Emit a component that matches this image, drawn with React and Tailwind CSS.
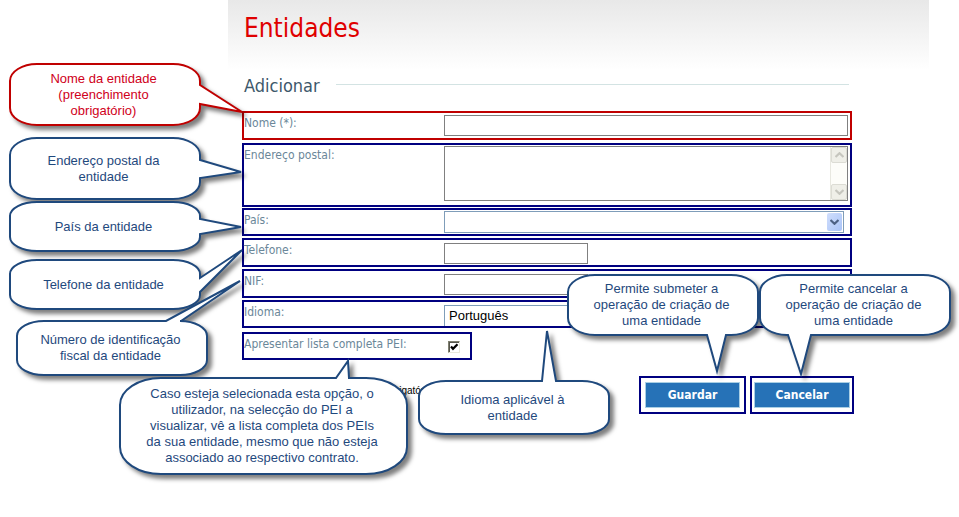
import React from "react";

const CALLOUTS = [
  {
    id: "nome",
    place: "left-[10px] top-[64px] w-[190px] h-[61px] text-[#d00020]",
    stroke: "#c00000",
    size: [190, 61], radius: [27, 17],
    side: "right", tail: [21, 232, 48, 40],
    lines: ["Nome da entidade", "(preenchimento", "obrigatório)"],
  },
  {
    id: "endereco",
    place: "left-[10px] top-[138px] w-[190px] h-[61px] text-[#1f497d]",
    size: [190, 61], radius: [27, 17],
    side: "right", tail: [22, 231, 34, 40],
    lines: ["Endereço postal da", "entidade"],
  },
  {
    id: "pais",
    place: "left-[10px] top-[202px] w-[190px] h-[49px] text-[#1f497d]",
    size: [190, 49], radius: [27, 14],
    side: "right", tail: [17, 231, 25, 32],
    lines: ["País da entidade"],
  },
  {
    id: "telefone",
    place: "left-[10px] top-[260px] w-[190px] h-[49px] text-[#1f497d]",
    size: [190, 49], radius: [27, 14],
    side: "right", tail: [18, 232, -10, 32],
    lines: ["Telefone da entidade"],
  },
  {
    id: "nif",
    place: "left-[17px] top-[321px] w-[190px] h-[54px] text-[#1f497d]",
    size: [190, 54], radius: [27, 15],
    side: "top", tail: [149, 223, -40, 164],
    lines: ["Número de identificação", "fiscal da entidade"],
  },
  {
    id: "lista",
    place: "left-[120px] top-[378px] w-[287px] h-[96px] text-[#1f497d]",
    size: [287, 96], radius: [41, 27],
    side: "top", tail: [216, 228, -17, 229],
    lines: [
      "Caso esteja selecionada esta opção, o",
      "utilizador, na selecção do PEI a",
      "visualizar, vê a lista completa dos PEIs",
      "da sua entidade, mesmo que não esteja",
      "associado ao respectivo contrato.",
    ],
  },
  {
    id: "idioma",
    place: "left-[419px] top-[381px] w-[190px] h-[53px] text-[#1f497d]",
    size: [190, 53], radius: [27, 15],
    side: "top", tail: [123, 128, -50, 137],
    lines: ["Idioma aplicável à", "entidade"],
  },
  {
    id: "guardar",
    place: "left-[568px] top-[275px] w-[190px] h-[60px] text-[#1f497d]",
    size: [190, 60], radius: [27, 17],
    side: "bottom", tail: [139, 149, 96, 158],
    lines: ["Permite submeter a", "operação de criação de", "uma entidade"],
  },
  {
    id: "cancelar",
    place: "left-[760px] top-[275px] w-[190px] h-[60px] text-[#1f497d]",
    size: [190, 60], radius: [27, 17],
    side: "bottom", tail: [28, 41, 99, 51],
    lines: ["Permite cancelar a", "operação de criação de", "uma entidade"],
  },
];

// Rounded bubble outline, clockwise from the top left, with a pointed tail on one side.
function bubblePath([w, h], [rx, ry], side, [start, tipX, tipY, end]) {
  const top = side === "top" ? `H${start} L${tipX} ${tipY} L${end} 0` : "";
  const right = side === "right" ? `V${start} L${tipX} ${tipY} L${w} ${end}` : "";
  const bottom = side === "bottom" ? `H${end} L${tipX} ${tipY} L${start} ${h}` : "";
  return `M${rx} 0 ${top} H${w - rx} A${rx} ${ry} 0 0 1 ${w} ${ry} ${right} V${h - ry} A${rx} ${ry} 0 0 1 ${w - rx} ${h} ${bottom} H${rx} A${rx} ${ry} 0 0 1 0 ${h - ry} V${ry} A${rx} ${ry} 0 0 1 ${rx} 0 Z`;
}

function Callout({ place, stroke = "#1f497d", size, radius, side, tail, lines }) {
  return (
    <div className={`absolute flex flex-col items-center justify-center pr-[3px] ${place}`}>
      <svg
        className="absolute inset-0 h-full w-full overflow-visible drop-shadow-[4px_4px_2px_rgba(0,0,0,0.5)]"
        aria-hidden="true"
      >
        <path d={bubblePath(size, radius, side, tail)} fill="#fff" stroke={stroke} strokeWidth="2" />
      </svg>
      <p className="relative text-center font-['Liberation_Sans',Arial,sans-serif] text-[13px] leading-4">
        {lines.map((line) => (
          <span key={line} className="block whitespace-nowrap">{line}</span>
        ))}
      </p>
    </div>
  );
}

function Row({ id, label, className, children }) {
  return (
    <div className={`grid grid-cols-[200px_minmax(0,1fr)] border-2 ${className}`}>
      <label htmlFor={id} className="whitespace-nowrap text-[12px] leading-5 text-[#6b8799]">
        {label}
      </label>
      {children}
    </div>
  );
}

function Chevron({ className, color, up }) {
  return (
    <svg viewBox="0 0 9 6" className={className} aria-hidden="true">
      <path d={up ? "M0.5 5 L4.5 1.2 L8.5 5" : "M0.5 1 L4.5 4.8 L8.5 1"} fill="none" stroke={color} strokeWidth="2.2" />
    </svg>
  );
}

function ActionButton({ children, className }) {
  return (
    <div className={`border-2 border-[#000080] py-1 ${className}`}>
      <button
        type="button"
        className="block h-[26px] w-full border border-[#a9cfe4] bg-[#2672b7] text-[12px] leading-6 font-bold text-white"
      >
        {children}
      </button>
    </div>
  );
}

export default function App() {
  return (
    <div className="relative min-h-screen overflow-hidden bg-white font-['DejaVu_Sans_Condensed','DejaVu_Sans',Tahoma,sans-serif] [font-stretch:condensed]">
      <main className="mr-[30px] ml-[228px]">
        <header className="h-[70px] bg-linear-to-b from-[#e8e8e8] to-white px-4 pt-3">
          <h1 className="text-[26px] leading-8 text-[#e00000]">Entidades</h1>
        </header>

        <form className="pr-[77px] pl-[14px]">
          <div className="flex h-[41px] items-start gap-4 pr-[3px] pl-[2px]">
            <h2 className="text-[18px] leading-8 text-[#3d586b]">Adicionar</h2>
            <hr className="mt-[14px] flex-1 border-[#d3e3e3]" />
          </div>

          <div className="flex flex-col gap-[2px]">
            <Row id="f-nome" label="Nome (*):" className="h-[29px] border-[#c00000]">
              <input id="f-nome" type="text" className="mt-[2px] mr-[2px] h-[21px] border border-[#808080] bg-white px-1 text-[13px]" />
            </Row>

            <Row id="f-endereco" label="Endereço postal:" className="mt-px h-[64px] border-[#000080]">
              <div className="relative mt-px mr-[2px] h-[55px]">
                <textarea id="f-endereco" className="block h-full w-full resize-none border border-[#808080] bg-white px-1 text-[13px]" />
                <div className="absolute top-px right-px bottom-px flex w-[17px] flex-col justify-between border-l border-[#e8e8e0] bg-[#fdfdf9]">
                  <span className="flex h-4 items-center justify-center rounded-[2px] border border-[#dcdcd4] bg-[#efefe8]">
                    <Chevron up color="#c6c6be" className="h-[6px] w-[9px]" />
                  </span>
                  <span className="flex h-4 items-center justify-center rounded-[2px] border border-[#dcdcd4] bg-[#efefe8]">
                    <Chevron color="#c6c6be" className="h-[6px] w-[9px]" />
                  </span>
                </div>
              </div>
            </Row>

            <Row id="f-pais" label="País:" className="-mt-px h-[28px] border-[#000080]">
              <div className="relative mt-px mr-[6px] h-[22px]">
                <select id="f-pais" className="block h-full w-full appearance-none border border-[#7f9db9] bg-white px-1 text-[13px]">
                  <option value=""></option>
                </select>
                <span className="pointer-events-none absolute top-[2px] right-[2px] flex h-[18px] w-[15px] items-center justify-center rounded-[2px] bg-linear-to-br from-[#d0defc] to-[#aac4f8]">
                  <Chevron color="#4d6185" className="h-[6px] w-[9px]" />
                </span>
              </div>
            </Row>

            <Row id="f-telefone" label="Telefone:" className="h-[29px] border-[#000080]">
              <input id="f-telefone" type="text" className="mt-[3px] h-[21px] w-36 border border-[#808080] bg-white px-1 text-[13px]" />
            </Row>

            <Row id="f-nif" label="NIF:" className="h-[29px] border-[#000080]">
              <input id="f-nif" type="text" className="mt-[3px] h-[21px] w-36 border border-[#808080] bg-white px-1 text-[13px]" />
            </Row>

            <Row id="f-idioma" label="Idioma:" className="h-[28px] border-[#000080]">
              <select
                id="f-idioma"
                className="mt-[3px] h-[21px] w-36 appearance-none border border-b-0 border-[#7f9db9] bg-white px-1 font-['Liberation_Sans',Arial,sans-serif] text-[13px] leading-5 text-black"
              >
                <option>Português</option>
              </select>
            </Row>

            <Row id="f-lista" label="Apresentar lista completa PEI:" className="mt-[2px] h-[28px] w-[230px] border-[#000080]">
              <span className="relative mt-[7px] ml-1 h-3 w-3">
                <input
                  id="f-lista"
                  type="checkbox"
                  defaultChecked
                  className="block h-3 w-3 appearance-none border border-t-[#808070] border-r-[#e8e8dc] border-b-[#e8e8dc] border-l-[#808070] bg-white shadow-[inset_1px_1px_0_#55554c]"
                />
                <svg viewBox="0 0 12 12" className="pointer-events-none absolute inset-0 h-3 w-3" aria-hidden="true">
                  <path d="M3 5.5 L5 7.8 L9.5 3.2" fill="none" stroke="#000" strokeWidth="2.2" />
                </svg>
              </span>
            </Row>
          </div>

          <div className="mt-4 flex items-start justify-between">
            <p className="mt-2 ml-[2px] w-[188px] text-right font-['Liberation_Sans',Arial,sans-serif] text-[10px] leading-[14px] whitespace-nowrap text-black">
              obrigatório
            </p>
            <div className="mr-[-2px] flex gap-1">
              <ActionButton className="w-[107px] px-1">Guardar</ActionButton>
              <ActionButton className="w-[104px] px-[2px]">Cancelar</ActionButton>
            </div>
          </div>
        </form>
      </main>

      {CALLOUTS.map(({ id, ...callout }) => (
        <Callout key={id} {...callout} />
      ))}
    </div>
  );
}
